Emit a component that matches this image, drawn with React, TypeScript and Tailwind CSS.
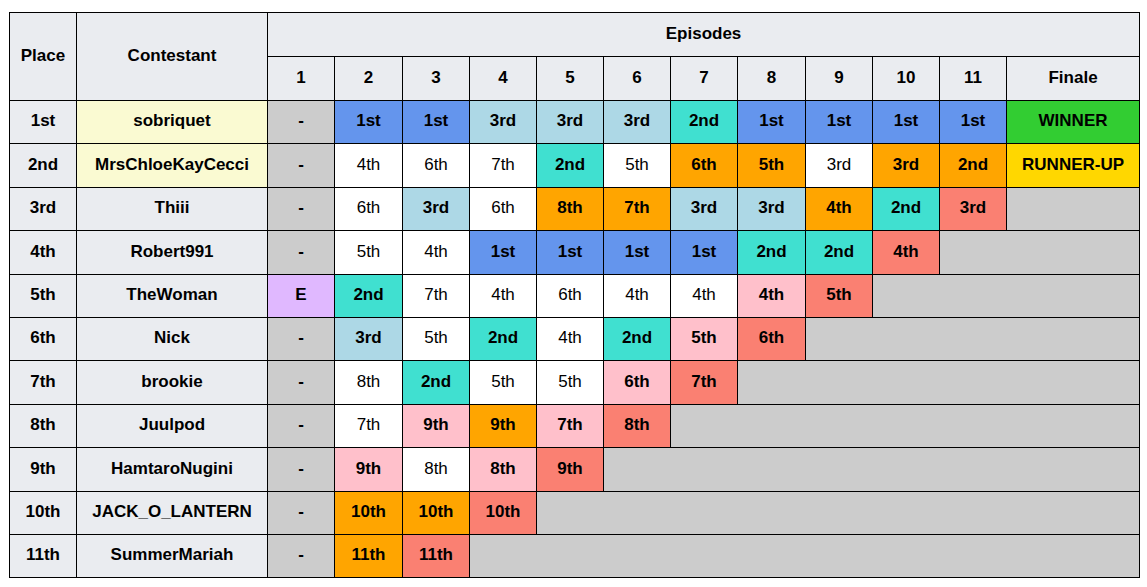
const C = {
  blue: "bg-[#6495ed] font-bold",
  lblue: "bg-[#add8e6] font-bold",
  teal: "bg-[#40e0d0] font-bold",
  orange: "bg-[#ffa500] font-bold",
  salmon: "bg-[#fa8072] font-bold",
  pink: "bg-[#ffc0cb] font-bold",
  white: "bg-white font-normal",
  gray: "bg-[#cccccc] font-bold",
  purple: "bg-[#e0b8ff] font-bold",
  green: "bg-[#32cd32] font-bold",
  gold: "bg-[#ffd700] font-bold",
};

type Cell = [string, keyof typeof C];

type Row = {
  place: string;
  name: string;
  top?: boolean;
  cells: Cell[];
  out: number; // leere Spalten am Ende
};

const rows: Row[] = [
  {
    place: "1st", name: "sobriquet", top: true, out: 0,
    cells: [["-", "gray"], ["1st", "blue"], ["1st", "blue"], ["3rd", "lblue"], ["3rd", "lblue"], ["3rd", "lblue"], ["2nd", "teal"], ["1st", "blue"], ["1st", "blue"], ["1st", "blue"], ["1st", "blue"], ["WINNER", "green"]],
  },
  {
    place: "2nd", name: "MrsChloeKayCecci", top: true, out: 0,
    cells: [["-", "gray"], ["4th", "white"], ["6th", "white"], ["7th", "white"], ["2nd", "teal"], ["5th", "white"], ["6th", "orange"], ["5th", "orange"], ["3rd", "white"], ["3rd", "orange"], ["2nd", "orange"], ["RUNNER-UP", "gold"]],
  },
  {
    place: "3rd", name: "Thiii", out: 1,
    cells: [["-", "gray"], ["6th", "white"], ["3rd", "lblue"], ["6th", "white"], ["8th", "orange"], ["7th", "orange"], ["3rd", "lblue"], ["3rd", "lblue"], ["4th", "orange"], ["2nd", "teal"], ["3rd", "salmon"]],
  },
  {
    place: "4th", name: "Robert991", out: 2,
    cells: [["-", "gray"], ["5th", "white"], ["4th", "white"], ["1st", "blue"], ["1st", "blue"], ["1st", "blue"], ["1st", "blue"], ["2nd", "teal"], ["2nd", "teal"], ["4th", "salmon"]],
  },
  {
    place: "5th", name: "TheWoman", out: 3,
    cells: [["E", "purple"], ["2nd", "teal"], ["7th", "white"], ["4th", "white"], ["6th", "white"], ["4th", "white"], ["4th", "white"], ["4th", "pink"], ["5th", "salmon"]],
  },
  {
    place: "6th", name: "Nick", out: 4,
    cells: [["-", "gray"], ["3rd", "lblue"], ["5th", "white"], ["2nd", "teal"], ["4th", "white"], ["2nd", "teal"], ["5th", "pink"], ["6th", "salmon"]],
  },
  {
    place: "7th", name: "brookie", out: 5,
    cells: [["-", "gray"], ["8th", "white"], ["2nd", "teal"], ["5th", "white"], ["5th", "white"], ["6th", "pink"], ["7th", "salmon"]],
  },
  {
    place: "8th", name: "Juulpod", out: 6,
    cells: [["-", "gray"], ["7th", "white"], ["9th", "pink"], ["9th", "orange"], ["7th", "pink"], ["8th", "salmon"]],
  },
  {
    place: "9th", name: "HamtaroNugini", out: 7,
    cells: [["-", "gray"], ["9th", "pink"], ["8th", "white"], ["8th", "pink"], ["9th", "salmon"]],
  },
  {
    place: "10th", name: "JACK_O_LANTERN", out: 8,
    cells: [["-", "gray"], ["10th", "orange"], ["10th", "orange"], ["10th", "salmon"]],
  },
  {
    place: "11th", name: "SummerMariah", out: 9,
    cells: [["-", "gray"], ["11th", "orange"], ["11th", "salmon"]],
  },
];

const epWidths = ["w-[67px]", "w-[68px]", "w-[67px]", "w-[67px]", "w-[67px]", "w-[67px]", "w-[67px]", "w-[68px]", "w-[67px]", "w-[67px]", "w-[67px]"];

const td = "border border-black text-center align-middle p-0 pb-[2px]";
const th = "border border-black bg-[#eaecf0] text-center align-middle font-bold p-0 pb-[2px]";

export default function App() {
  return (
    <div className="min-h-screen bg-white pl-[9px] pt-[12px] font-['Liberation_Sans',Arial,sans-serif] text-[17px] text-black">
      <table className="w-[1131px] table-fixed border-collapse">
        <colgroup>
          <col className="w-[67px]" />
          <col className="w-[191px]" />
          {epWidths.map((w, i) => (
            <col key={i} className={w} />
          ))}
          <col className="w-[133px]" />
        </colgroup>
        <thead>
          <tr className="h-[44px]">
            <th rowSpan={2} className={th}>Place</th>
            <th rowSpan={2} className={th}>Contestant</th>
            <th colSpan={12} className={th}>Episodes</th>
          </tr>
          <tr className="h-[44px]">
            {Array.from({ length: 11 }, (_, i) => (
              <th key={i} className={th}>{i + 1}</th>
            ))}
            <th className={th}>Finale</th>
          </tr>
        </thead>
        <tbody>
          {rows.map((r) => (
            <tr key={r.place} className="h-[43.4px]">
              <td className={`${td} bg-[#eaecf0] font-bold`}>{r.place}</td>
              <td className={`${td} font-bold ${r.top ? "bg-[#fafad2]" : "bg-[#eaecf0]"}`}>{r.name}</td>
              {r.cells.map(([t, c], i) => (
                <td key={i} className={`${td} ${C[c]}`}>{t}</td>
              ))}
              {r.out > 0 && <td colSpan={r.out} className={`${td} bg-[#cccccc]`} />}
            </tr>
          ))}
        </tbody>
      </table>
    </div>
  );
}
